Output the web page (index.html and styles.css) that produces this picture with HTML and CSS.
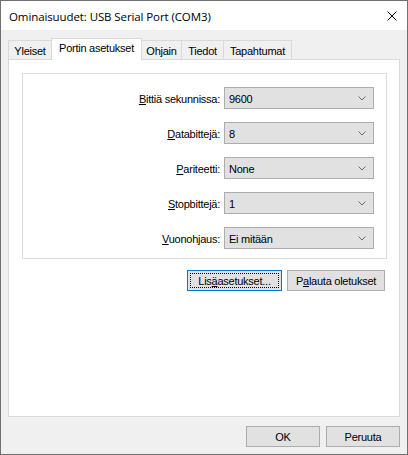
FILE: index.html
```html
<!DOCTYPE html>
<html lang="fi">
<head>
<meta charset="utf-8">
<title>Ominaisuudet: USB Serial Port (COM3)</title>
<link rel="stylesheet" href="styles.css">
</head>
<body>
<div class="window">
  <div class="titlebar">
    <span class="title">Ominaisuudet: USB Serial Port (COM3)</span>
    <span class="close">
      <svg width="10" height="10" viewBox="0 0 10 10"><path d="M0.5 0.5 L9.5 9.5 M9.5 0.5 L0.5 9.5" stroke="#000" stroke-width="1" fill="none"/></svg>
    </span>
  </div>
  <div class="content">
    <div class="tabs">
      <div class="tab t1">Yleiset</div>
      <div class="tab active t2">Portin asetukset</div>
      <div class="tab t3">Ohjain</div>
      <div class="tab t4">Tiedot</div>
      <div class="tab t5">Tapahtumat</div>
    </div>
    <div class="panel">
      <div class="group">
        <label class="lbl"><u>B</u>ittiä sekunnissa:</label>
        <div class="select"><span>9600</span><svg class="chev" width="8" height="5" viewBox="0 0 8 5"><path d="M0.5 0.5 L4 4 L7.5 0.5" stroke="#6a6a6a" fill="none" stroke-width="1"/></svg></div>
        <label class="lbl"><u>D</u>atabittejä:</label>
        <div class="select"><span>8</span><svg class="chev" width="8" height="5" viewBox="0 0 8 5"><path d="M0.5 0.5 L4 4 L7.5 0.5" stroke="#6a6a6a" fill="none" stroke-width="1"/></svg></div>
        <label class="lbl"><u>P</u>ariteetti:</label>
        <div class="select"><span>None</span><svg class="chev" width="8" height="5" viewBox="0 0 8 5"><path d="M0.5 0.5 L4 4 L7.5 0.5" stroke="#6a6a6a" fill="none" stroke-width="1"/></svg></div>
        <label class="lbl"><u>S</u>topbittejä:</label>
        <div class="select"><span>1</span><svg class="chev" width="8" height="5" viewBox="0 0 8 5"><path d="M0.5 0.5 L4 4 L7.5 0.5" stroke="#6a6a6a" fill="none" stroke-width="1"/></svg></div>
        <label class="lbl"><u>V</u>uonohjaus:</label>
        <div class="select"><span>Ei mitään</span><svg class="chev" width="8" height="5" viewBox="0 0 8 5"><path d="M0.5 0.5 L4 4 L7.5 0.5" stroke="#6a6a6a" fill="none" stroke-width="1"/></svg></div>
      </div>
      <div class="panel-buttons">
        <button class="btn focused w-lisa">Lis<u>ä</u>asetukset...</button>
        <button class="btn w-pal">P<u>a</u>lauta oletukset</button>
      </div>
    </div>
    <div class="footer">
      <button class="btn w-ok">OK</button>
      <button class="btn w-ok">Peruuta</button>
    </div>
  </div>
</div>
</body>
</html>
```

FILE: styles.css
```css
html, body {
  margin: 0;
  padding: 0;
  background: #ffffff;
}

.window {
  width: 408px;
  height: 455px;
  box-sizing: border-box;
  border: 1px solid #707070;
  background: #f0f0f0;
  display: flex;
  flex-direction: column;
  font-family: "Liberation Sans", Arial, sans-serif;
  font-size: 11px;
  letter-spacing: -0.25px;
  color: #000;
}

.titlebar {
  height: 29px;
  background: #ffffff;
  display: flex;
  align-items: center;
  justify-content: space-between;
  padding-left: 8px;
  padding-right: 10px;
  flex: none;
}

.title {
  font-family: "Open Sans", "Noto Sans", sans-serif;
  font-size: 11.5px;
  letter-spacing: -0.1px;
  color: #000;
  padding-top: 1px;
}

.close {
  display: flex;
  width: 10px;
  height: 10px;
  margin-top: 1px;
}

.content {
  flex: 1;
  display: flex;
  flex-direction: column;
  padding: 8px 7px 0 7px;
}

.tabs {
  display: flex;
  align-items: flex-end;
  height: 21px;
  flex: none;
}

.tab {
  box-sizing: border-box;
  height: 19px;
  border: 1px solid #d9d9d9;
  border-bottom: none;
  background: #f0f0f0;
  display: flex;
  align-items: center;
  justify-content: center;
  padding-top: 2px;
  margin-left: -1px;
}

.tab.t1 { width: 44px; margin-left: 0; }
.tab.t2 { width: 91px; }
.tab.t3 { width: 41px; }
.tab.t4 { width: 43px; }
.tab.t5 { width: 69px; }

.tab.active {
  height: 22px;
  margin-bottom: -1px;
  background: #ffffff;
  position: relative;
  z-index: 1;
  padding-top: 0;
  padding-bottom: 3px;
}

.panel {
  box-sizing: border-box;
  height: 358px;
  border: 1px solid #d9d9d9;
  background: #ffffff;
  padding: 13px 12px 0 13px;
  flex: none;
}

.group {
  border: 1px solid #dcdcdc;
  height: 186px;
  box-sizing: border-box;
  padding: 13px 12px 0 0;
  display: grid;
  grid-template-columns: 1fr 150px;
  grid-auto-rows: 22px;
  row-gap: 13px;
  column-gap: 4px;
  align-items: center;
}

.lbl {
  text-align: right;
  padding-top: 1px;
}

.select {
  box-sizing: border-box;
  height: 22px;
  border: 1px solid #adadad;
  background: #e1e1e1;
  display: flex;
  align-items: center;
  justify-content: space-between;
  padding: 1px 7px 0 4px;
}

.chev {
  display: block;
}

.panel-buttons {
  display: flex;
  justify-content: flex-end;
  gap: 5px;
  margin-top: 11px;
  margin-right: 2px;
}

.btn {
  box-sizing: border-box;
  height: 21px;
  border: 1px solid #adadad;
  background: #e1e1e1;
  font-family: "Liberation Sans", Arial, sans-serif;
  font-size: 11px;
  letter-spacing: -0.25px;
  color: #000;
  padding: 1px 0 0 0;
  margin: 0;
  position: relative;
}

.btn.focused {
  border-color: #0078d7;
}

.btn.focused::after {
  content: "";
  position: absolute;
  left: 2px;
  top: 2px;
  right: 2px;
  bottom: 2px;
  border: 1px dotted #000;
}

.w-lisa { width: 95px; }
.w-pal { width: 98px; }
.w-ok { width: 74px; }

.footer {
  display: flex;
  justify-content: flex-end;
  gap: 6px;
  padding-top: 9px;
}
```
